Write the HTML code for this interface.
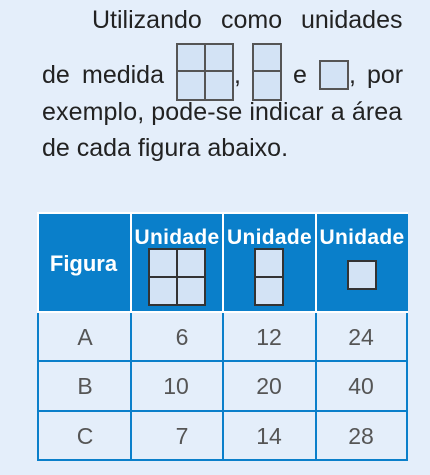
<!DOCTYPE html><html><head><style>
body{margin:0;width:430px;height:475px;background:#e4eefa;position:relative;overflow:hidden;font-family:"Liberation Sans",sans-serif;color:#222}
.t{position:absolute;font-size:25px;white-space:nowrap}
.b{position:absolute;background:#d3e3f5;border:2px solid #555;box-sizing:border-box}
.v{position:absolute;background:#555}
.hd{position:absolute;background:#0a7fca;color:#fff;font-weight:bold;font-size:21px;text-align:center}
.c{position:absolute;font-size:23px;color:#555;text-align:center;width:90px}
.bl{position:absolute;background:#0a7fca}
</style></head><body>
<div class="t" style="left:92px;top:6px">Utilizando</div>
<div class="t" style="left:221px;top:6px">como</div>
<div class="t" style="left:301px;top:6px">unidades</div>
<div class="t" style="left:42px;top:61px">de</div>
<div class="t" style="left:82px;top:61px">medida</div>
<div class="b" style="left:176px;top:43px;width:58px;height:58px"></div>
<div class="v" style="left:204px;top:43px;width:2px;height:58px"></div>
<div class="v" style="left:176px;top:70px;width:58px;height:2px"></div>
<div class="t" style="left:234px;top:61px">,</div>
<div class="b" style="left:252px;top:43px;width:30px;height:58px"></div>
<div class="v" style="left:252px;top:70px;width:30px;height:2px"></div>
<div class="t" style="left:293px;top:61px">e</div>
<div class="b" style="left:319px;top:60px;width:30px;height:30px"></div>
<div class="t" style="left:349px;top:61px">,</div>
<div class="t" style="left:367px;top:61px">por</div>
<div class="t" style="left:42px;top:98px;letter-spacing:0.1px">exemplo, pode-se indicar a área</div>
<div class="t" style="left:42px;top:134px">de cada figura abaixo.</div>

<div class="hd" style="left:37px;top:212px;width:371px;height:99px"></div>
<div class="hd" style="left:37px;top:212px;width:93px;height:99px;line-height:104px;background:none;font-size:22px">Figura</div>
<div style="position:absolute;left:130px;top:212px;width:2px;height:100px;background:#fff"></div>
<div style="position:absolute;left:222px;top:212px;width:2px;height:100px;background:#fff"></div>
<div style="position:absolute;left:315px;top:212px;width:2px;height:100px;background:#fff"></div>
<div style="position:absolute;left:37px;top:311px;width:371px;height:2px;background:#fff"></div>
<div style="position:absolute;left:37px;top:212px;width:371px;height:2px;background:#fff"></div>
<div style="position:absolute;left:37px;top:212px;width:2px;height:100px;background:#fff"></div>
<div class="hd" style="left:130px;top:226px;width:94px;background:none;letter-spacing:0.3px">Unidade</div>
<div class="hd" style="left:223px;top:226px;width:93px;background:none;letter-spacing:0.3px">Unidade</div>
<div class="hd" style="left:316px;top:226px;width:92px;background:none;letter-spacing:0.3px">Unidade</div>
<div class="b" style="left:148px;top:248px;width:58px;height:58px;border-color:#333"></div>
<div class="v" style="left:176px;top:248px;width:2px;height:58px;background:#333"></div>
<div class="v" style="left:148px;top:276px;width:58px;height:2px;background:#333"></div>
<div class="b" style="left:254px;top:248px;width:30px;height:58px;border-color:#333"></div>
<div class="v" style="left:254px;top:276px;width:30px;height:2px;background:#333"></div>
<div class="b" style="left:347px;top:260px;width:30px;height:30px;border-color:#333"></div>

<div class="bl" style="left:37px;top:313px;width:2px;height:148px"></div>
<div class="bl" style="left:406px;top:313px;width:2px;height:148px"></div>
<div class="bl" style="left:130px;top:313px;width:2px;height:148px"></div>
<div class="bl" style="left:222px;top:313px;width:2px;height:148px"></div>
<div class="bl" style="left:315px;top:313px;width:2px;height:148px"></div>
<div class="bl" style="left:37px;top:360px;width:371px;height:2px"></div>
<div class="bl" style="left:37px;top:410px;width:371px;height:2px"></div>
<div class="bl" style="left:37px;top:459px;width:371px;height:2px"></div>

<div class="c" style="left:40px;top:324px">A</div>
<div class="c" style="left:137px;top:324px">6</div>
<div class="c" style="left:224px;top:324px">12</div>
<div class="c" style="left:316px;top:324px">24</div>
<div class="c" style="left:40px;top:373px">B</div>
<div class="c" style="left:131px;top:373px">10</div>
<div class="c" style="left:224px;top:373px">20</div>
<div class="c" style="left:316px;top:373px">40</div>
<div class="c" style="left:40px;top:423px">C</div>
<div class="c" style="left:137px;top:423px">7</div>
<div class="c" style="left:224px;top:423px">14</div>
<div class="c" style="left:316px;top:423px">28</div>
</body></html>
